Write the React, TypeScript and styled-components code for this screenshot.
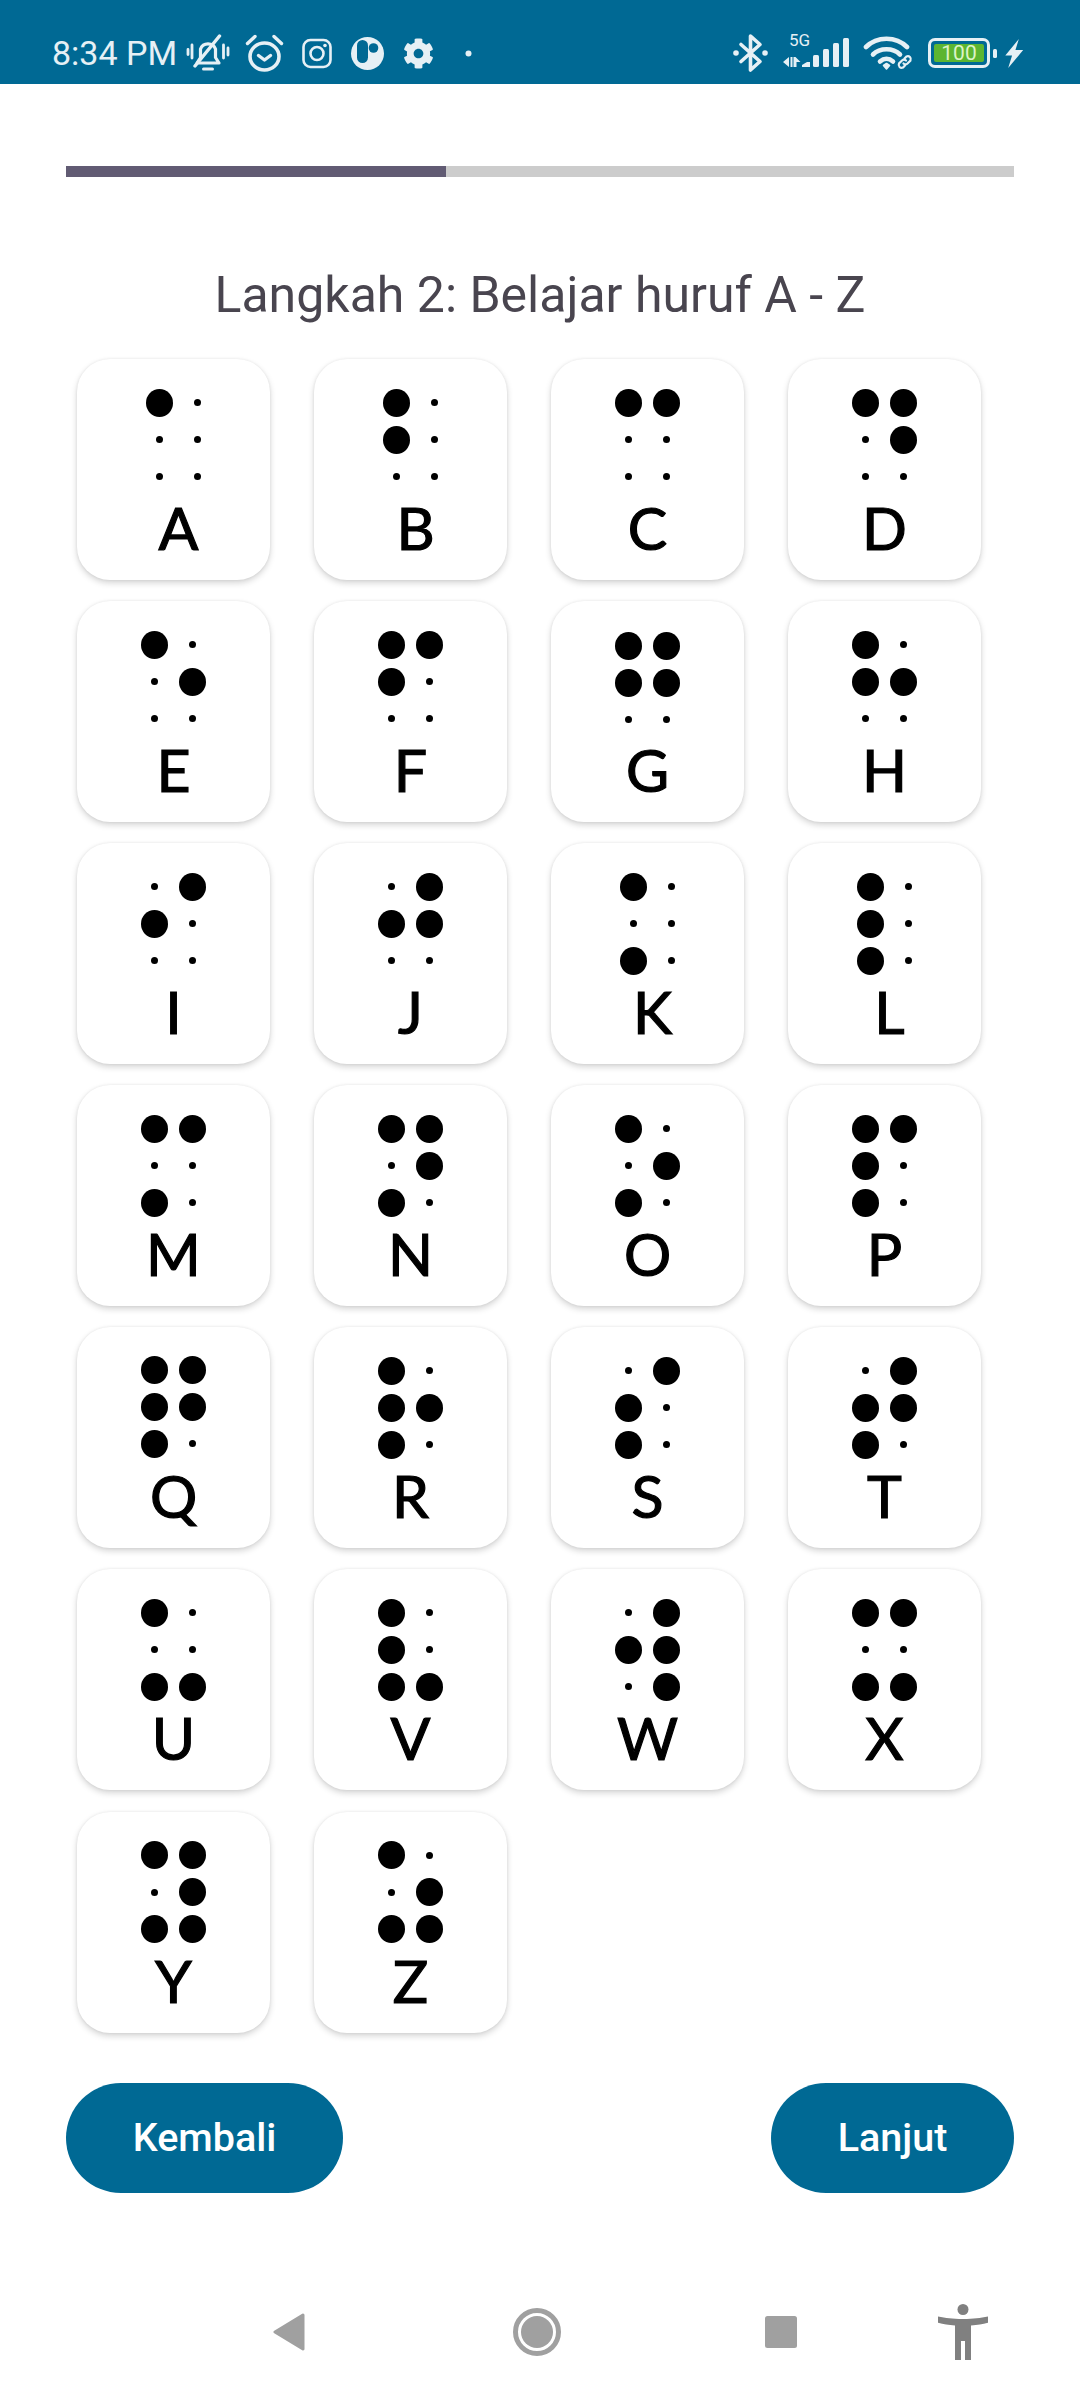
import React from "react";
import styled, { createGlobalStyle } from "styled-components";
import { FaCog } from "react-icons/fa";

const Global = createGlobalStyle`
  html, body { margin: 0; padding: 0; background: #fff; }
  body { font-family: Roboto, "Liberation Sans", sans-serif; }
`;

const BAR = "#006994";
const ICON = "#e6f0f5";

const Page = styled.div`
  width: 1080px;
  height: 2400px;
  display: flex;
  flex-direction: column;
  background: #fff;
  overflow: hidden;
`;

const StatusBar = styled.header`
  height: 84px;
  box-sizing: border-box;
  padding: 22px 0 0 52px;
  display: flex;
  align-items: center;
  background: ${BAR};
  color: ${ICON};
`;

const Time = styled.span`
  font-size: 34px;
  line-height: 40px;
  width: 134px;
  white-space: nowrap;
  font-family: Roboto, sans-serif;
`;

const Icon = styled.svg<{ $ml: number }>`
  display: block;
  flex: none;
  margin-left: ${(p) => p.$ml}px;
`;

const Gear = styled(FaCog)`
  display: block;
  flex: none;
  width: 31px;
  height: 31px;
  margin-left: 19px;
`;

const Signal = styled.div`
  position: relative;
  flex: none;
  width: 68px;
  height: 40px;
  margin-left: 14px;
`;

const FiveG = styled.span`
  position: absolute;
  left: 7px;
  top: -1px;
  font-size: 17px;
  line-height: 16px;
  color: ${ICON};
`;

const Battery = styled.div`
  position: relative;
  flex: none;
  box-sizing: border-box;
  width: 62px;
  height: 30px;
  margin-left: 15px;
  border: 3px solid ${ICON};
  border-radius: 7px;
  padding: 3px;
  display: flex;
  &::after {
    content: "";
    position: absolute;
    right: -10px;
    top: 8px;
    width: 4px;
    height: 9px;
    border-radius: 1.5px;
    background: ${ICON};
  }
`;

const BatteryFill = styled.div`
  flex: 1;
  border-radius: 2px;
  background: #5cb531;
  color: #dcf3c8;
  font-size: 21px;
  line-height: 18px;
  text-align: center;
  font-family: Roboto, sans-serif;
`;

const Main = styled.main`
  display: flex;
  flex-direction: column;
  padding: 0 66px;
`;

const Track = styled.div`
  margin-top: 82px;
  height: 11px;
  background: #cccccc;
`;

const Fill = styled.div`
  width: 380px;
  height: 100%;
  background: #615b73;
`;

const Title = styled.h1`
  margin: 88px 0 0;
  font-family: Roboto, sans-serif;
  font-weight: 400;
  font-size: 50px;
  line-height: 60px;
  text-align: center;
  color: #49454f;
`;

const Grid = styled.div`
  margin: 34px 0 0 11px;
  display: grid;
  grid-template-columns: repeat(4, 193px);
  grid-auto-rows: 221px;
  column-gap: 44px;
  row-gap: 21.1px;
`;

const Card = styled.div<{ $shift: boolean }>`
  box-sizing: border-box;
  display: flex;
  flex-direction: column;
  align-items: center;
  padding-top: 25px;
  padding-left: ${(p) => (p.$shift ? 10 : 0)}px;
  border-radius: 33px;
  background: #fff;
  box-shadow: 0 3px 6px rgba(0, 0, 0, 0.17), 0 0 3px rgba(0, 0, 0, 0.07);
`;

const Dots = styled.div<{ $dy: number }>`
  display: grid;
  grid-template-columns: repeat(2, 38.5px);
  grid-auto-rows: 37px;
  place-items: center;
  margin-top: ${(p) => p.$dy}px;
  margin-bottom: ${(p) => -p.$dy}px;
`;

const Dot = styled.span<{ $big: boolean }>`
  display: block;
  width: ${(p) => (p.$big ? 27 : 7)}px;
  height: ${(p) => (p.$big ? 28 : 7)}px;
  border-radius: 50%;
  background: #000;
`;

const Letter = styled.div`
  margin-top: 3px;
  font-family: Lato, "Open Sans", sans-serif;
  font-size: 59px;
  line-height: 60px;
  font-weight: 400;
  color: #000;
  -webkit-text-stroke: 1.2px #000;
`;

const Actions = styled.div`
  margin-top: 50px;
  display: flex;
  justify-content: space-between;
`;

const Button = styled.button<{ $w: number }>`
  width: ${(p) => p.$w}px;
  height: 110px;
  border: 0;
  border-radius: 55px;
  background: ${BAR};
  color: #fff;
  padding: 0;
  font-family: Roboto, sans-serif;
  font-weight: 500;
  font-size: 39.5px;
`;

const Nav = styled.nav`
  margin-top: 107px;
  height: 64px;
  padding-left: 273px;
  display: flex;
  align-items: center;
`;

const LETTERS: [string, number[]][] = [
  ["A", [1]], ["B", [1, 2]], ["C", [1, 4]], ["D", [1, 4, 5]],
  ["E", [1, 5]], ["F", [1, 2, 4]], ["G", [1, 2, 4, 5]], ["H", [1, 2, 5]],
  ["I", [2, 4]], ["J", [2, 4, 5]], ["K", [1, 3]], ["L", [1, 2, 3]],
  ["M", [1, 3, 4]], ["N", [1, 3, 4, 5]], ["O", [1, 3, 5]], ["P", [1, 2, 3, 4]],
  ["Q", [1, 2, 3, 4, 5]], ["R", [1, 2, 3, 5]], ["S", [2, 3, 4]], ["T", [2, 3, 4, 5]],
  ["U", [1, 3, 6]], ["V", [1, 2, 3, 6]], ["W", [2, 4, 5, 6]], ["X", [1, 3, 4, 6]],
  ["Y", [1, 3, 4, 5, 6]], ["Z", [1, 3, 5, 6]],
];

const ORDER = [1, 4, 2, 5, 3, 6];
const SHIFTED = "ABKL";
const NUDGE: Record<string, number> = { G: 1, Q: -1 };

export default function App() {
  return (
    <Page>
      <Global />
      <StatusBar>
        <Time>8:34 PM</Time>
        <Icon $ml={0} width="44" height="38" viewBox="0 0 43 38" fill="none" stroke={ICON} strokeLinecap="round">
          <path d="M10.5 29h22l-3.500-5.500v-8.500a8 8 0 0 0-15 0v8.500z" strokeWidth="3.2" strokeLinejoin="round" />
          <path d="M8.500 32 33 2" strokeWidth="3.4" />
          <path d="M17 35h9" strokeWidth="3" />
          <path d="M1.500 15.500v5M5.500 11v13M37 11v13M41.500 14v7" strokeWidth="2.800" />
        </Icon>
        <Icon $ml={15} width="39" height="38" viewBox="0 0 39 38" fill="none" stroke={ICON} strokeLinecap="round">
          <ellipse cx="19.5" cy="22.5" rx="14.5" ry="13.5" strokeWidth="3.6" />
          <path d="M13.500 21.500l6 4.500 6-4.500" strokeWidth="3.400" strokeLinejoin="round" />
          <path d="M2.500 9.500 10 2.500M36.500 9.500 29 2.500" strokeWidth="3.400" />
        </Icon>
        <Icon $ml={18} width="30" height="31" viewBox="0 0 30 30" fill="none" stroke={ICON}>
          <rect x="1.5" y="1.5" width="27" height="27" rx="7" strokeWidth="2.6" />
          <circle cx="15" cy="15" r="6.5" strokeWidth="2.6" />
          <circle cx="23" cy="7" r="1.8" fill={ICON} stroke="none" />
        </Icon>
        <Icon $ml={19} width="33" height="33" viewBox="0 0 33 33">
          <circle cx="16.5" cy="16.5" r="16.5" fill={ICON} />
          <rect x="6" y="3" width="11" height="23" rx="5.5" fill={BAR} />
          <circle cx="22.500" cy="11" r="4.800" fill={BAR} />
        </Icon>
        <Gear />
        <Icon $ml={31} width="7" height="7" viewBox="0 0 7 7">
          <circle cx="3.5" cy="3.5" r="3" fill={ICON} />
        </Icon>
        <Icon $ml={261} width="35" height="40" viewBox="0 0 35 40" fill="none" stroke={ICON} strokeWidth="3.6">
          <path d="M8 11.5 27 28.5 17.5 37V3L27 11.5 8 28.5" strokeLinejoin="round" strokeLinecap="round" />
          <circle cx="3" cy="20" r="2.8" fill={ICON} stroke="none" />
          <circle cx="32" cy="20" r="2.8" fill={ICON} stroke="none" />
        </Icon>
        <Signal>
          <FiveG>5G</FiveG>
          <svg width="68" height="40" viewBox="0 0 68 40" fill={ICON}>
            <path d="M1 29l6-5v10zM8.500 24h2v10h-2zM11.500 24h2l5 5h-4v5h-3z" />
            <path d="M20 34v-2l5-3h3v5z" />
            <rect x="31" y="22" width="6" height="12" rx="1.500" />
            <rect x="41" y="16" width="6" height="18" rx="1.500" />
            <rect x="51" y="10" width="6" height="24" rx="1.500" />
            <rect x="61" y="5" width="6" height="29" rx="1.500" />
          </svg>
        </Signal>
        <Icon $ml={13} width="50" height="36" viewBox="0 0 50 36" fill="none" stroke={ICON} strokeLinecap="round">
          <path d="M3 12C14 1 33 1 44 12" strokeWidth="4.6" />
          <path d="M10 19.5c7-7 20-7 27 0" strokeWidth="4.6" />
          <path d="M17 26.5c4-3.5 9-3.5 13 0" strokeWidth="4.6" />
          <path d="M20.5 30.5l3-2 3 2-3 3.5z" fill={ICON} strokeWidth="1.6" strokeLinejoin="round" />
          <g strokeWidth="2.2">
            <path d="M41.5 23.5l2-2a3 3 0 0 1 4 4l-3 3a3 3 0 0 1-4 0" />
            <path d="M42 30.5l-2 2a3 3 0 0 1-4-4l3-3a3 3 0 0 1 4 0" />
          </g>
        </Icon>
        <Battery>
          <BatteryFill>100</BatteryFill>
        </Battery>
        <Icon $ml={14} width="20" height="29" viewBox="0 0 20 30">
          <path d="M15 0 1 17h7L4 30 19.5 11.5h-8z" fill={ICON} />
        </Icon>
      </StatusBar>
      <Main>
        <Track>
          <Fill />
        </Track>
        <Title>Langkah 2: Belajar huruf A - Z</Title>
        <Grid>
          {LETTERS.map(([letter, on]) => (
            <Card key={letter} $shift={SHIFTED.includes(letter)}>
              <Dots $dy={NUDGE[letter] ?? 0}>
                {ORDER.map((n) => (
                  <Dot key={n} $big={on.includes(n)} />
                ))}
              </Dots>
              <Letter>{letter}</Letter>
            </Card>
          ))}
        </Grid>
        <Actions>
          <Button $w={277}>Kembali</Button>
          <Button $w={243}>Lanjut</Button>
        </Actions>
      </Main>
      <Nav>
        <Icon $ml={0} width="32" height="38" viewBox="0 0 32 38">
          <path d="M30 2 2 19l28 17z" fill="#a0a0a0" stroke="#a0a0a0" strokeWidth="3" strokeLinejoin="round" />
        </Icon>
        <Icon $ml={208} width="48" height="48" viewBox="0 0 48 48">
          <circle cx="24" cy="24" r="21.5" fill="none" stroke="#a0a0a0" strokeWidth="5" />
          <circle cx="24" cy="24" r="16" fill="#a0a0a0" />
        </Icon>
        <Icon $ml={204} width="32" height="32" viewBox="0 0 32 32">
          <rect width="32" height="32" rx="2.5" fill="#a0a0a0" />
        </Icon>
        <Icon $ml={141} width="50" height="56" viewBox="0 0 50 56">
          <circle cx="25" cy="5.5" r="5.5" fill="#808080" />
          <path d="M0 12.5c8 1.5 14 2.5 25 2.5s17-1 25-2.5l1 6c-6 1.500-11 2.500-18 3V56h-6V37h-4v19h-6V21.500c-7-.5-12-1.500-18-3z" fill="#808080" />
        </Icon>
      </Nav>
    </Page>
  );
}
